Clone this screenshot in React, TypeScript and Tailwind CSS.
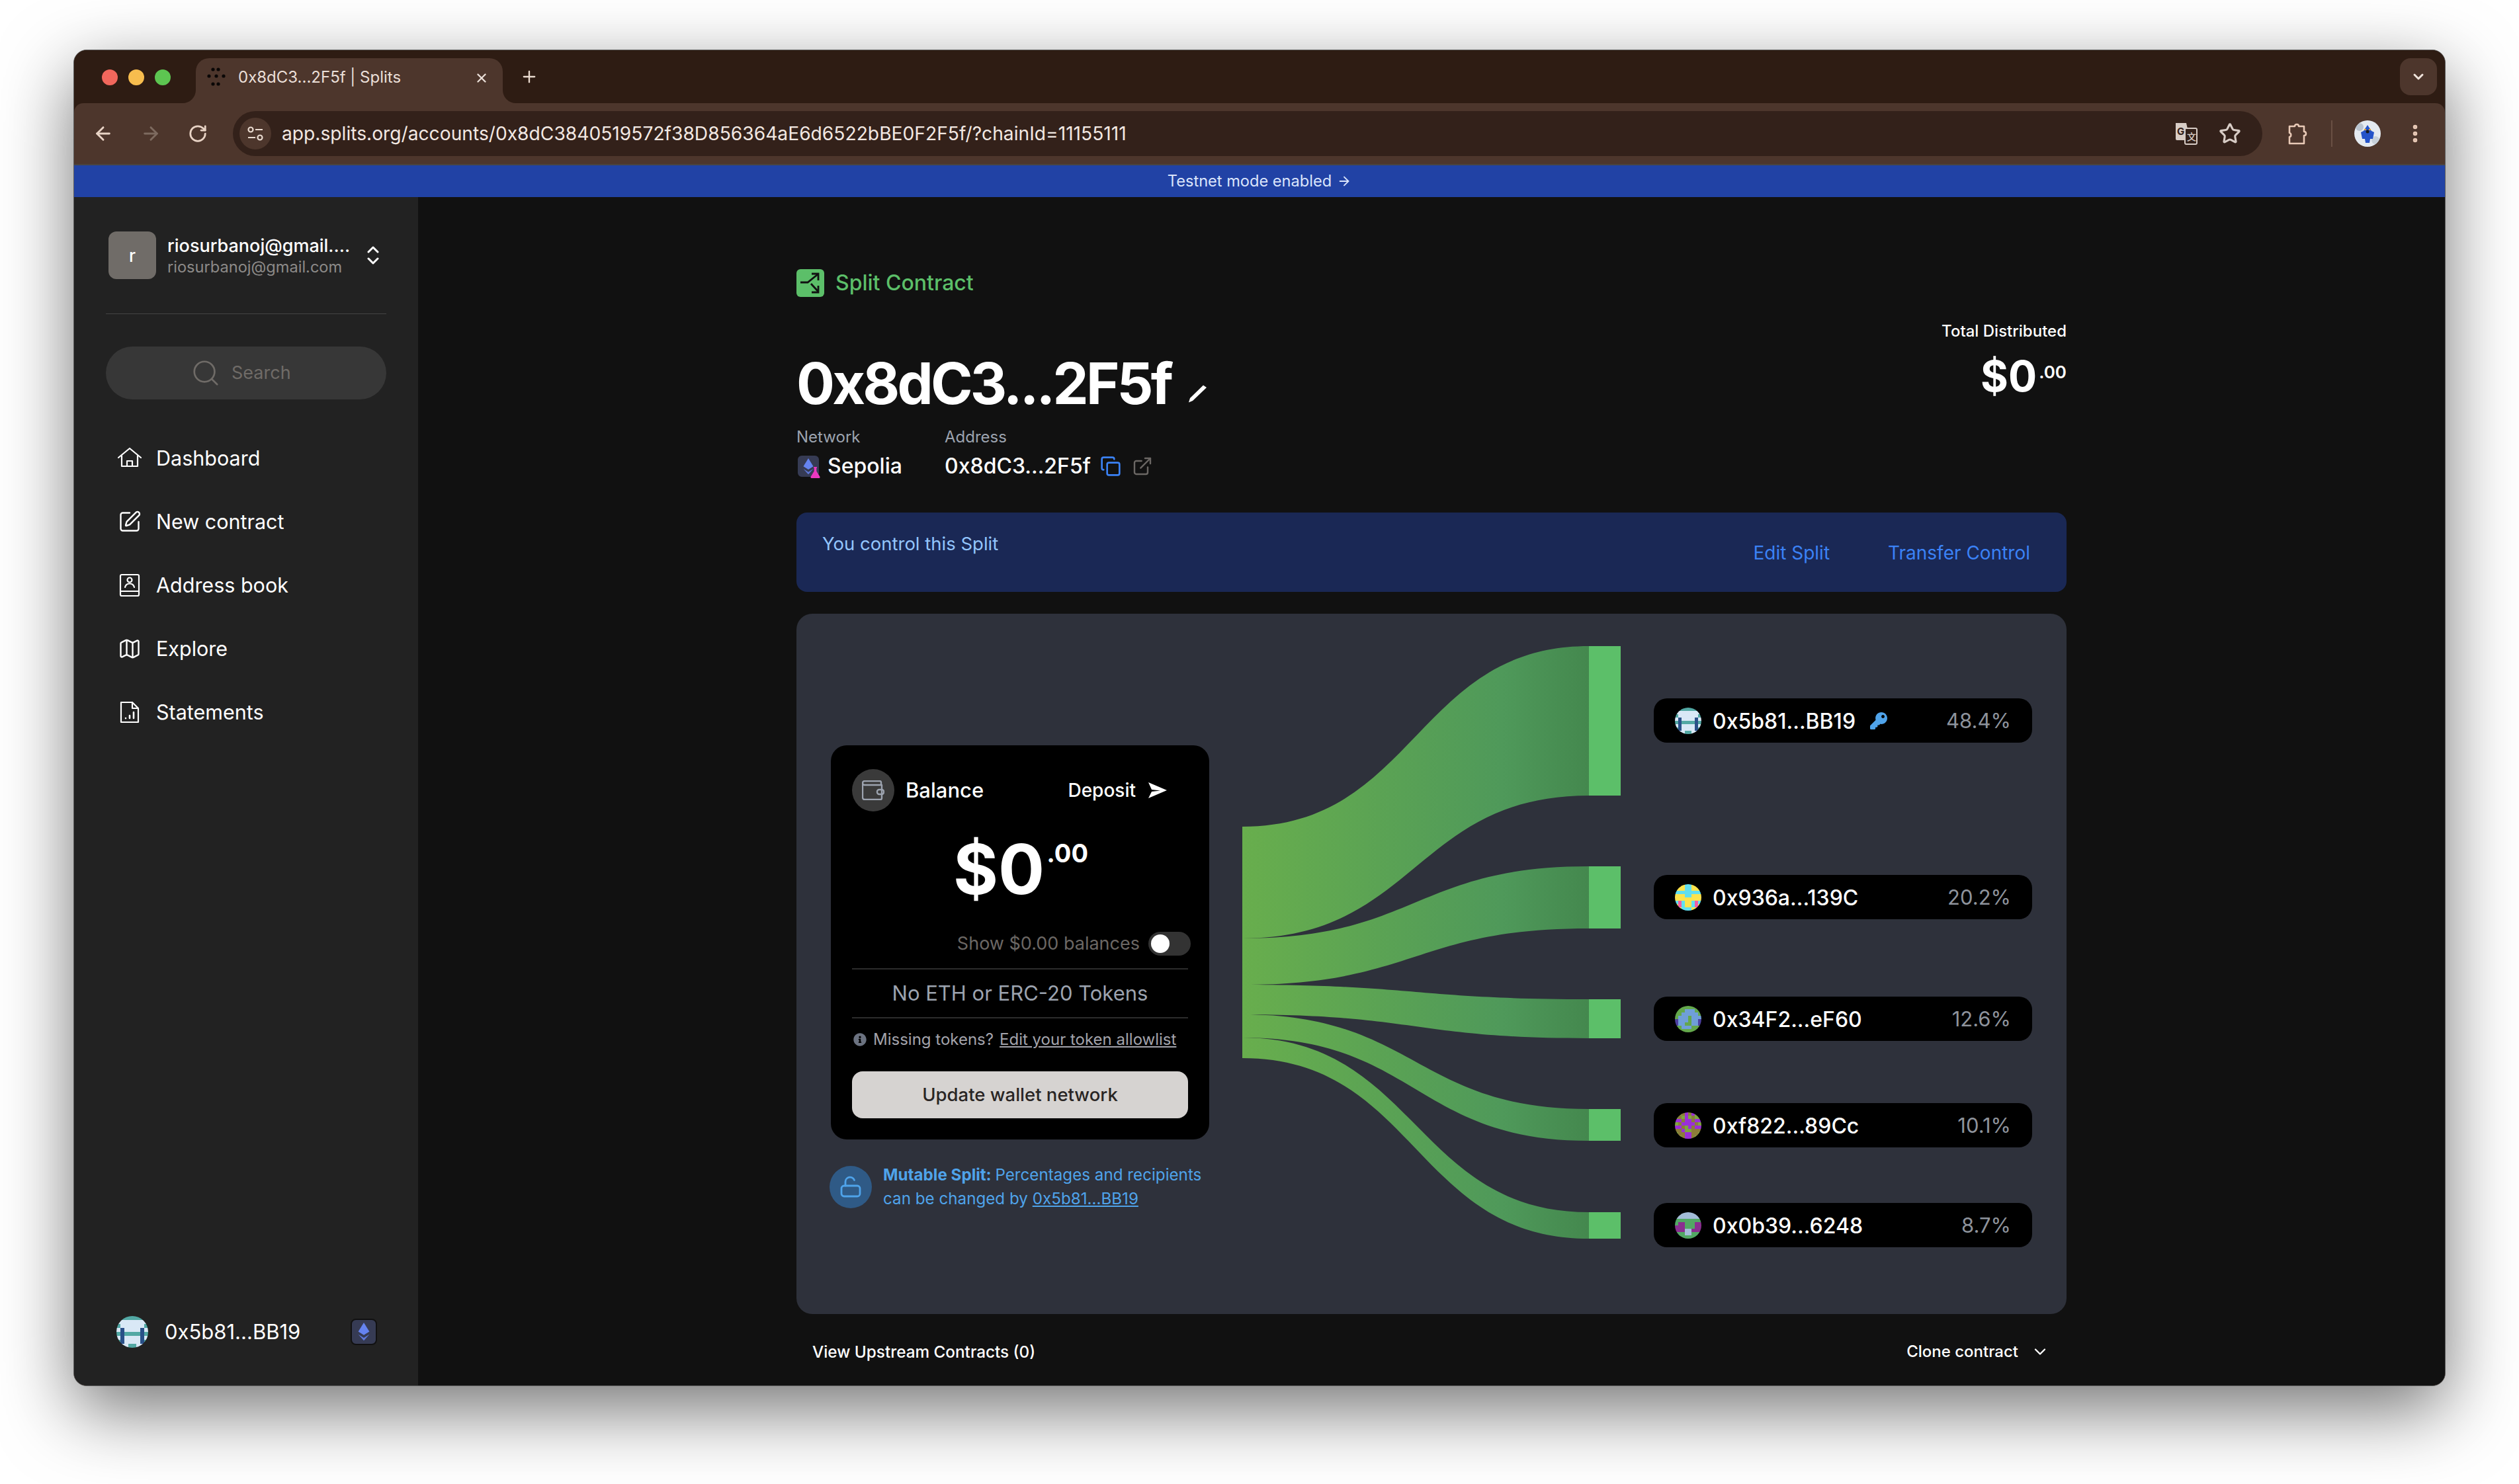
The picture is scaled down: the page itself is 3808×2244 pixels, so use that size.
import { Copy, ExternalLink, Map as MapIcon, SquarePen, Search, ChevronDown, X, Plus, ArrowLeft, ArrowRight, RotateCw, Star, ArrowRight as Arrow, EllipsisVertical } from 'lucide-react'
import { FaKey, FaInfoCircle } from 'react-icons/fa'

const palettes: Record<string, Record<string, string>> = {
  a: { l: '#d9e8f6', t: '#52a8a4', n: '#2a5088' },
  b: { l: '#fde34d', t: '#62dff0', n: '#ee5fa7' },
  c: { l: '#64a84c', t: '#6f9fd8', n: '#4c3fa0' },
  d: { l: '#7fa63f', t: '#9a2fd8', n: '#8c7c3a' },
  e: { l: '#52a864', t: '#a3bcd8', n: '#8a2f90' },
}

const patterns: Record<string, string[]> = {
  a: ['lttttttl', 'llllllll', 'tllllllt', 'lnllllnl', 'tnttttnt', 'lnllllnl', 'tnllllnt', 'lllttlll'],
  b: ['lllttlll', 'lllttlll', 'tttttttt', 'lllttlll', 'llllllll', 'tntlltnt', 'lntlltnl', 'lltttlll'],
  c: ['llllllll', 'llltttll', 'lltttttl', 'ltttlttt', 'ntttlttn', 'nttllttn', 'lltttlll', 'llllllll'],
  d: ['llntntll', 'lnltlnll', 'ttnttntt', 'lnttttnl', 'ttnltntt', 'nntllnnn', 'lnnttnnl', 'llnttnll'],
  e: ['tttttttt', 'tttttttt', 'llllllll', 'lnnlllnn', 'nnnlllnn', 'nnnttnnn', 'lllttlll', 'llllllll'],
}

function Blockie({ id, size }: { id: string; size: number }) {
  const colors = palettes[id]
  return (
    <svg width={size} height={size} viewBox="0 0 8 8" className="shrink-0 rounded-full" shapeRendering="crispEdges">
      {patterns[id].map((row, y) =>
        row.split('').map((c, x) => <rect key={`${x}-${y}`} x={x} y={y} width="1.02" height="1.02" fill={colors[c]} />),
      )}
    </svg>
  )
}

function EthBadge({ size, flask }: { size: number; flask?: boolean }) {
  return (
    <div
      className="relative flex shrink-0 items-center justify-center rounded-lg border-2 border-[#111] bg-[#363b54]"
      style={{ width: size, height: size }}
    >
      <svg width={size * 0.5} height={size * 0.68} viewBox="0 0 16 26" fill="#6583f0">
        <path d="M8 0 16 13 8 18 0 13Z" />
        <path d="M0 17 8 22 16 17 8 26Z" opacity="0.85" />
      </svg>
      {flask && (
        <svg className="absolute -right-0.5 -bottom-0.5" width="15" height="17" viewBox="0 0 15 17" fill="#ec38c0">
          <path d="M5 0h5v1.500H9.300v5L14.500 15a1.400 1.400 0 0 1-1.200 2H1.700a1.400 1.400 0 0 1-1.200-2L5.700 6.500v-5H5Z" />
        </svg>
      )}
    </div>
  )
}

const navItems = [
  {
    label: 'Dashboard',
    icon: (
      <svg width="36" height="36" viewBox="0 0 36 36" fill="none" stroke="#fff" strokeWidth="2.200" strokeLinecap="round" strokeLinejoin="round">
        <path d="M1 17 18 3l17 14" />
        <path d="M6 14v16h24V14" />
        <path d="M14 30v-8h8v8" />
      </svg>
    ),
  },
  { label: 'New contract', icon: <SquarePen size={36} strokeWidth={1.600} color="#fff" /> },
  {
    label: 'Address book',
    icon: (
      <svg width="36" height="36" viewBox="0 0 36 36" fill="none" stroke="#fff" strokeWidth="2.200" strokeLinecap="round" strokeLinejoin="round">
        <rect x="4" y="2" width="28" height="32" rx="2" />
        <path d="M4 27h28" />
        <circle cx="18" cy="10" r="3.500" />
        <path d="M11 21c1-4 4-5.500 7-5.500s6 1.500 7 5.500" />
      </svg>
    ),
  },
  { label: 'Explore', icon: <MapIcon size={36} strokeWidth={1.600} color="#fff" /> },
  {
    label: 'Statements',
    icon: (
      <svg width="36" height="36" viewBox="0 0 36 36" fill="none" stroke="#fff" strokeWidth="2.200" strokeLinecap="round" strokeLinejoin="round">
        <path d="M5 3h17l9 9v21H5Z" />
        <path d="M22 3v9h9" />
        <path d="M12 27v.1M18 27v-4M24 27v-9" strokeWidth="2.600" />
      </svg>
    ),
  },
]

const links = [
  { y0: 1250, y1: 1419, y2: 977, y3: 1203 },
  { y0: 1419, y1: 1489, y2: 1310, y3: 1404 },
  { y0: 1489, y1: 1534, y2: 1511, y3: 1570 },
  { y0: 1534, y1: 1569, y2: 1677, y3: 1725 },
  { y0: 1569, y1: 1600, y2: 1833, y3: 1873 },
]

const recipients = [
  { id: 'a', address: '0x5b81...BB19', pct: '48.4%', mt: 'mt-[128px]', owner: true },
  { id: 'b', address: '0x936a...139C', pct: '20.2%', mt: 'mt-[200px]' },
  { id: 'c', address: '0x34F2...eF60', pct: '12.6%', mt: 'mt-[117px]' },
  { id: 'd', address: '0xf822...89Cc', pct: '10.1%', mt: 'mt-[94px]' },
  { id: 'e', address: '0x0b39...6248', pct: '8.7%', mt: 'mt-[84px]' },
]

function Sankey() {
  return (
    <svg width="572" height="896" viewBox="1878 977 572 896" className="mt-[49px] ml-[50px] shrink-0">
      <defs>
        <linearGradient id="flow" gradientUnits="userSpaceOnUse" x1="1878" y1="0" x2="2402" y2="0">
          <stop offset="0" stopColor="#68ae4d" />
          <stop offset="0.75" stopColor="#4f995a" />
          <stop offset="1" stopColor="#44884e" />
        </linearGradient>
      </defs>
      {links.map((l) => (
        <g key={l.y0}>
          <path
            d={`M1878 ${l.y0}C2140 ${l.y0} 2140 ${l.y2} 2402 ${l.y2}V${l.y3}C2140 ${l.y3} 2140 ${l.y1} 1878 ${l.y1}Z`}
            fill="url(#flow)"
          />
          <rect x="2402" y={l.y2} width="48" height={l.y3 - l.y2} fill="#5cbf69" />
        </g>
      ))}
    </svg>
  )
}

function Sidebar() {
  return (
    <aside className="flex w-[520px] shrink-0 flex-col justify-between bg-[#222] px-[48px] pt-[52px] pb-[57px]">
      <div>
        <div className="flex h-[72px] items-center pl-[4px]">
          <div className="flex h-[72px] w-[72px] items-center justify-center rounded-xl bg-[#706c68] text-[26px] font-medium text-white">r</div>
          <div className="ml-[17px] w-[300px]">
            <div className="h-[34px] text-[27px] leading-[34px] font-medium whitespace-nowrap text-white">riosurbanoj@gmail....</div>
            <div className="mt-[1px] h-[28px] text-[23.6px] leading-[28px] text-[#8c8a88]">riosurbanoj@gmail.com</div>
          </div>
          <svg width="18" height="30" viewBox="0 0 18 30" fill="none" stroke="#fff" strokeWidth="3" strokeLinecap="round" strokeLinejoin="round" className="ml-[2px]">
            <path d="M2 10 9 3l7 7M2 20l7 7 7-7" />
          </svg>
        </div>
        <div className="mt-[52px] h-[1px] bg-[#444]" />
        <div className="mt-[49px] flex h-[80px] items-center rounded-full bg-[#373737] pl-[128px]">
          <Search size={46} strokeWidth={1.400} color="#6f6b67" />
          <span className="ml-[16px] text-[27px] text-[#6f6b67]">Search</span>
        </div>
        <nav className="mt-[41px]">
          {navItems.map((item) => (
            <div key={item.label} className="flex h-[96px] items-center gap-[22px] pl-[18px] text-[30.5px] text-white">
              {item.icon}
              <span>{item.label}</span>
            </div>
          ))}
        </nav>
      </div>
      <div className="flex items-center pl-[16px]">
        <Blockie id="a" size={48} />
        <span className="ml-[25px] text-[31px] text-white">0x5b81...BB19</span>
        <div className="mr-[14px] ml-auto">
          <EthBadge size={40} />
        </div>
      </div>
    </aside>
  )
}

function BalanceCard() {
  return (
    <div className="h-[596px] w-[572px] rounded-[24px] bg-black px-[32px] pt-[36px]">
      <div className="flex h-[64px] items-center">
        <div className="flex h-[64px] w-[64px] items-center justify-center rounded-full bg-[#3a3a3a]">
          <svg width="34" height="30" viewBox="0 0 34 30" fill="none" stroke="#9ca3af" strokeWidth="2.400" strokeLinejoin="round">
            <path d="M29 7V3a2 2 0 0 0-2-2H4a3 3 0 0 0-3 3v22a3 3 0 0 0 3 3h24a2 2 0 0 0 2-2V7H4a3 3 0 0 1-3-3" />
            <rect x="23" y="14" width="10" height="7" rx="3" />
          </svg>
        </div>
        <span className="ml-[17px] text-[31px] font-medium text-white">Balance</span>
        <span className="ml-auto text-[28px] font-medium text-white">Deposit</span>
        <svg width="28" height="24" viewBox="0 0 28 24" fill="#fff" className="mr-[32px] ml-[19px]">
          <path d="M0 0 28 12 0 24 5 14 18 12.500 5 11Z" />
        </svg>
      </div>
      <div className="mt-[32px] flex h-[110px] items-start justify-center pl-[2px] font-bold text-white">
        <span className="text-[104px] leading-[110px]">$0</span>
        <span className="mt-[6px] ml-[3px] text-[38px] leading-[50px]">.00</span>
      </div>
      <div className="mt-[40px] flex h-[36px] items-center justify-end">
        <span className="text-[27px] text-[#6b6764]">Show $0.00 balances</span>
        <div className="-mr-[4px] ml-[13px] flex h-[36px] w-[64px] items-center rounded-full bg-[#333] pl-[4px]">
          <div className="h-[28px] w-[28px] rounded-full bg-white" />
        </div>
      </div>
      <div className="mt-[19px] flex h-[76px] items-center justify-center border-y-2 border-[#2c2c2c] text-[31px] text-[#9ca3af]">
        No ETH or ERC-20 Tokens
      </div>
      <div className="mt-[14px] flex h-[36px] items-center pl-[2px] text-[24px] text-[#a3a3ab]">
        <FaInfoCircle size={20} color="#6b7280" />
        <span className="ml-[10px]">Missing tokens?</span>
        <span className="ml-[9px] underline">Edit your token allowlist</span>
      </div>
      <div className="mt-[30px] flex h-[71px] items-center justify-center rounded-2xl bg-[#d6d3d1] text-[27.5px] font-medium text-[#292524]">
        Update wallet network
      </div>
    </div>
  )
}

function ChainPanel() {
  return (
    <div className="mt-[33px] flex h-[1059px] items-start rounded-[24px] bg-[#2e313b] pl-[52px]">
      <div className="mt-[199px] w-[572px] shrink-0">
        <BalanceCard />
        <div className="mt-[36px] -ml-[2px] flex items-center">
          <div className="flex h-[64px] w-[64px] shrink-0 items-center justify-center rounded-full bg-[#2f5a86]">
            <svg width="34" height="34" viewBox="0 0 34 34" fill="none" stroke="#4fa3ea" strokeWidth="2.800" strokeLinecap="round">
              <rect x="3" y="15" width="28" height="16" rx="4" />
              <path d="M9 15V9a7 7 0 0 1 13.500-2.500" />
            </svg>
          </div>
          <p className="ml-[17px] text-[24.2px] leading-[36px] whitespace-nowrap text-[#4fa3ea]">
            <span className="font-bold">Mutable Split: </span>Percentages and recipients
            <br />
            can be changed by <span className="underline">0x5b81...BB19</span>
          </p>
        </div>
      </div>
      <Sankey />
      <div className="ml-[50px] w-[572px] shrink-0">
        {recipients.map((r) => (
          <div key={r.id} className={`${r.mt} flex h-[67px] items-center rounded-[20px] bg-black pr-[32px] pl-[32px]`}>
            <Blockie id={r.id} size={40} />
            <span className="ml-[17px] pt-[2px] text-[32px] font-medium text-white">{r.address}</span>
            {r.owner && <FaKey size={26} color="#4fa3ea" className="ml-[22px]" />}
            <span className="ml-auto pt-[2px] text-[31px] text-[#8e939c]">{r.pct}</span>
          </div>
        ))}
      </div>
    </div>
  )
}

function Main() {
  return (
    <main className="flex-1 bg-[#111] pt-[109px]">
      <div className="mx-auto w-[1920px]">
        <div className="flex h-[42px] items-center gap-[17px]">
          <div className="flex h-[42px] w-[42px] items-center justify-center rounded-md bg-[#5cbf69]">
            <svg width="36" height="36" viewBox="0 0 36 36" fill="none" stroke="#111" strokeWidth="2.800">
              <path d="M3 17h11L29 5" />
              <path d="M20 4h10v10" />
              <path d="M19 19l11 12" />
              <path d="M30 22v10H20" />
            </svg>
          </div>
          <span className="text-[32px] font-medium text-[#5cbf69]">Split Contract</span>
        </div>
        <div className="mt-[40px] flex items-start justify-between">
          <div>
            <div className="mt-[41px] flex h-[100px] items-center">
              <h1 className="text-[86px] leading-[100px] font-bold tracking-[-0.044em] text-white">0x8dC3...2F5f</h1>
              <svg width="28" height="28" viewBox="0 0 28 28" fill="#fff" className="mt-[30px] ml-[27px]">
                <path d="M22 1.500 27 5 6 25 0 27.500 2 21Z" />
              </svg>
            </div>
            <div className="mt-[16px] flex">
              <div className="w-[224px]">
                <div className="h-[30px] text-[24px] leading-[30px] text-[#9ca3af]">Network</div>
                <div className="mt-[9px] flex h-[40px] items-center gap-[11px]">
                  <EthBadge size={36} flask />
                  <span className="text-[32px] font-medium text-white">Sepolia</span>
                </div>
              </div>
              <div>
                <div className="h-[30px] text-[24px] leading-[30px] text-[#9ca3af]">Address</div>
                <div className="mt-[9px] flex h-[40px] items-center">
                  <span className="text-[32px] font-medium text-white">0x8dC3...2F5f</span>
                  <Copy size={32} strokeWidth={2} color="#3b82f6" className="ml-[14px]" />
                  <ExternalLink size={32} strokeWidth={1.800} color="#6b6764" className="ml-[16px]" />
                </div>
              </div>
            </div>
          </div>
          <div className="text-right text-white">
            <div className="text-[24px] leading-[24px] font-medium">Total Distributed</div>
            <div className="mt-[20px] flex h-[72px] items-start justify-end font-bold">
              <span className="text-[64px] leading-[72px]">$0</span>
              <span className="mt-[14px] ml-[3px] text-[26px] leading-[32px] font-semibold">.00</span>
            </div>
          </div>
        </div>
        <div className="mt-[50px] flex h-[120px] items-start justify-between rounded-2xl bg-[#1a2855] px-[39px] pt-[30px]">
          <span className="text-[27.5px] leading-[34px] text-[#93c5fd]">You control this Split</span>
          <div className="mt-[14px] mr-[16px] flex gap-[88px] text-[28px] leading-[34px] text-[#3b82f6]">
            <span>Edit Split</span>
            <span>Transfer Control</span>
          </div>
        </div>
        <ChainPanel />
        <div className="mt-[41px] flex h-[32px] items-center justify-between pr-[26px] pl-[24px] text-[24.3px] font-medium text-white">
          <span>View Upstream Contracts (0)</span>
          <div className="flex items-center gap-[19px] text-[24px]">
            <span>Clone contract</span>
            <ChevronDown size={28} />
          </div>
        </div>
      </div>
    </main>
  )
}

function Favicon() {
  const dots = [[9, 2], [17, 2], [3, 12], [14, 12], [25, 12], [9, 24], [17, 24]]
  return (
    <svg width="28" height="28" viewBox="0 0 28 28" fill="#0a0706" className="shrink-0">
      {dots.map(([x, y]) => (
        <circle key={`${x}${y}`} cx={x} cy={y + 1} r="2.600" />
      ))}
    </svg>
  )
}

function BrowserChrome() {
  return (
    <>
      <div className="relative flex h-[80px] shrink-0 items-start bg-[#2e1c13] pt-[12px]">
        <div className="mt-[17px] ml-[42px] flex gap-[16px]">
          <div className="h-[24px] w-[24px] rounded-full bg-[#f1675c]" />
          <div className="h-[24px] w-[24px] rounded-full bg-[#f7bd4e]" />
          <div className="h-[24px] w-[24px] rounded-full bg-[#5dc551]" />
        </div>
        <div className="relative ml-[38px] flex h-[68px] w-[464px] items-start rounded-t-[20px] bg-[#4d362c] pt-[14px] pl-[17px] text-[24px] leading-[30px] text-[#eadfd8]">
          <svg width="20" height="20" viewBox="0 0 20 20" fill="#4d362c" className="absolute bottom-0 -left-[20px]">
            <path d="M20 0v20H0A20 20 0 0 0 20 0Z" />
          </svg>
          <svg width="20" height="20" viewBox="0 0 20 20" fill="#4d362c" className="absolute -right-[20px] bottom-0">
            <path d="M0 0v20h20A20 20 0 0 1 0 0Z" />
          </svg>
          <Favicon />
          <span className="ml-[19px]">0x8dC3...2F5f | Splits</span>
          <X size={22} strokeWidth={2.600} className="absolute top-[19px] right-[21px]" />
        </div>
        <Plus size={28} strokeWidth={2} color="#eadbd0" className="mt-[14px] ml-[26px]" />
        <div className="mr-[12px] ml-auto flex h-[56px] w-[56px] items-center justify-center rounded-2xl bg-[#4d362c]">
          <ChevronDown size={24} strokeWidth={3} color="#f0e4dc" />
        </div>
      </div>
      <div className="flex h-[94px] shrink-0 items-center rounded-t-[14px] border-b-2 border-[#4a4440] bg-[#4d362c] bg-clip-padding">
        <ArrowLeft size={32} strokeWidth={2.200} color="#e8d3c5" className="ml-[28px]" />
        <ArrowRight size={32} strokeWidth={2.200} color="#7d6a5f" className="ml-[40px]" />
        <RotateCw size={30} strokeWidth={2.200} color="#e8d3c5" className="ml-[40px]" />
        <div className="ml-[38px] flex h-[68px] w-[3068px] items-center rounded-full bg-[#33211a] pl-[10px]">
          <div className="flex h-[48px] w-[48px] items-center justify-center rounded-full bg-[#4d362c]">
            <svg width="26" height="26" viewBox="0 0 26 26" fill="none" stroke="#eadbd0" strokeWidth="2.200">
              <circle cx="6" cy="7" r="3.500" />
              <path d="M13 7h11M2 19h11" />
              <circle cx="20" cy="19" r="3.500" />
            </svg>
          </div>
          <span className="ml-[16px] text-[28.2px] text-[#f2e8e2]">
            app.splits.org/accounts/0x8dC3840519572f38D856364aE6d6522bBE0F2F5f/?chainId=11155111
          </span>
          <svg width="34" height="34" viewBox="0 0 34 34" className="mr-[32px] ml-auto">
            <path d="M1 1h16l6 26H3a2 2 0 0 1-2-2Z" fill="#d8cdc6" />
            <rect x="15" y="9" width="18" height="24" rx="2" fill="#33211a" stroke="#d8cdc6" strokeWidth="2" />
            <text x="3" y="19" fontSize="15" fontWeight="700" fill="#33211a" fontFamily="Inter">G</text>
            <text x="18" y="27" fontSize="14" fontWeight="500" fill="#d8cdc6" fontFamily="Inter, 'Noto Sans CJK SC'">文</text>
          </svg>
          <Star size={34} strokeWidth={2.200} color="#d8cdc6" className="mr-[32px]" />
        </div>
        <svg width="30" height="34" viewBox="0 0 30 34" fill="none" stroke="#e8c9b6" strokeWidth="2.600" strokeLinejoin="round" className="ml-[38px]">
          <path d="M3 6h8c0-4 6-4 6 0h8v8c4 0 4 6 0 6v12H3V22c3 0 3-6 0-6Z" />
        </svg>
        <div className="ml-[36px] h-[40px] w-[2px] bg-[#6a5044]" />
        <svg width="40" height="40" viewBox="0 0 40 40" className="ml-[33px] rounded-full bg-[#e4eaf0]">
          <circle cx="8" cy="10" r="6" fill="#b9c4cf" />
          <circle cx="32" cy="30" r="6" fill="#c6d0d9" />
          <path d="M20 7 26 16 30 18 28 28 24 28 23 34 17 34 16 28 12 28 10 18 14 16Z" fill="#2453c9" />
          <circle cx="20" cy="17" r="2.500" fill="#1a1a1a" />
          <path d="M15 14h3M22 14h3" stroke="#e0a030" strokeWidth="2" />
        </svg>
        <EllipsisVertical size={34} strokeWidth={2.600} color="#e8c9b6" className="ml-[35px]" />
      </div>
      <div className="flex h-[48px] shrink-0 items-center justify-center gap-[8px] bg-[#2142a5] text-[23.6px] text-[#dbe5fb]">
        <span>Testnet mode enabled</span>
        <Arrow size={22} />
      </div>
    </>
  )
}

export default function App() {
  return (
    <div className="h-[2244px] w-[3808px] overflow-hidden bg-white pt-[75px] pl-[111px] [font-family:Inter,sans-serif]">
      <div className="flex h-[2021px] w-[3586px] flex-col overflow-hidden rounded-[20px] border border-[#5e5e5e] bg-[#2e1c13] shadow-[0_36px_110px_rgba(0,0,0,0.55)]">
        <BrowserChrome />
        <div className="flex min-h-0 flex-1">
          <Sidebar />
          <Main />
        </div>
      </div>
    </div>
  )
}
